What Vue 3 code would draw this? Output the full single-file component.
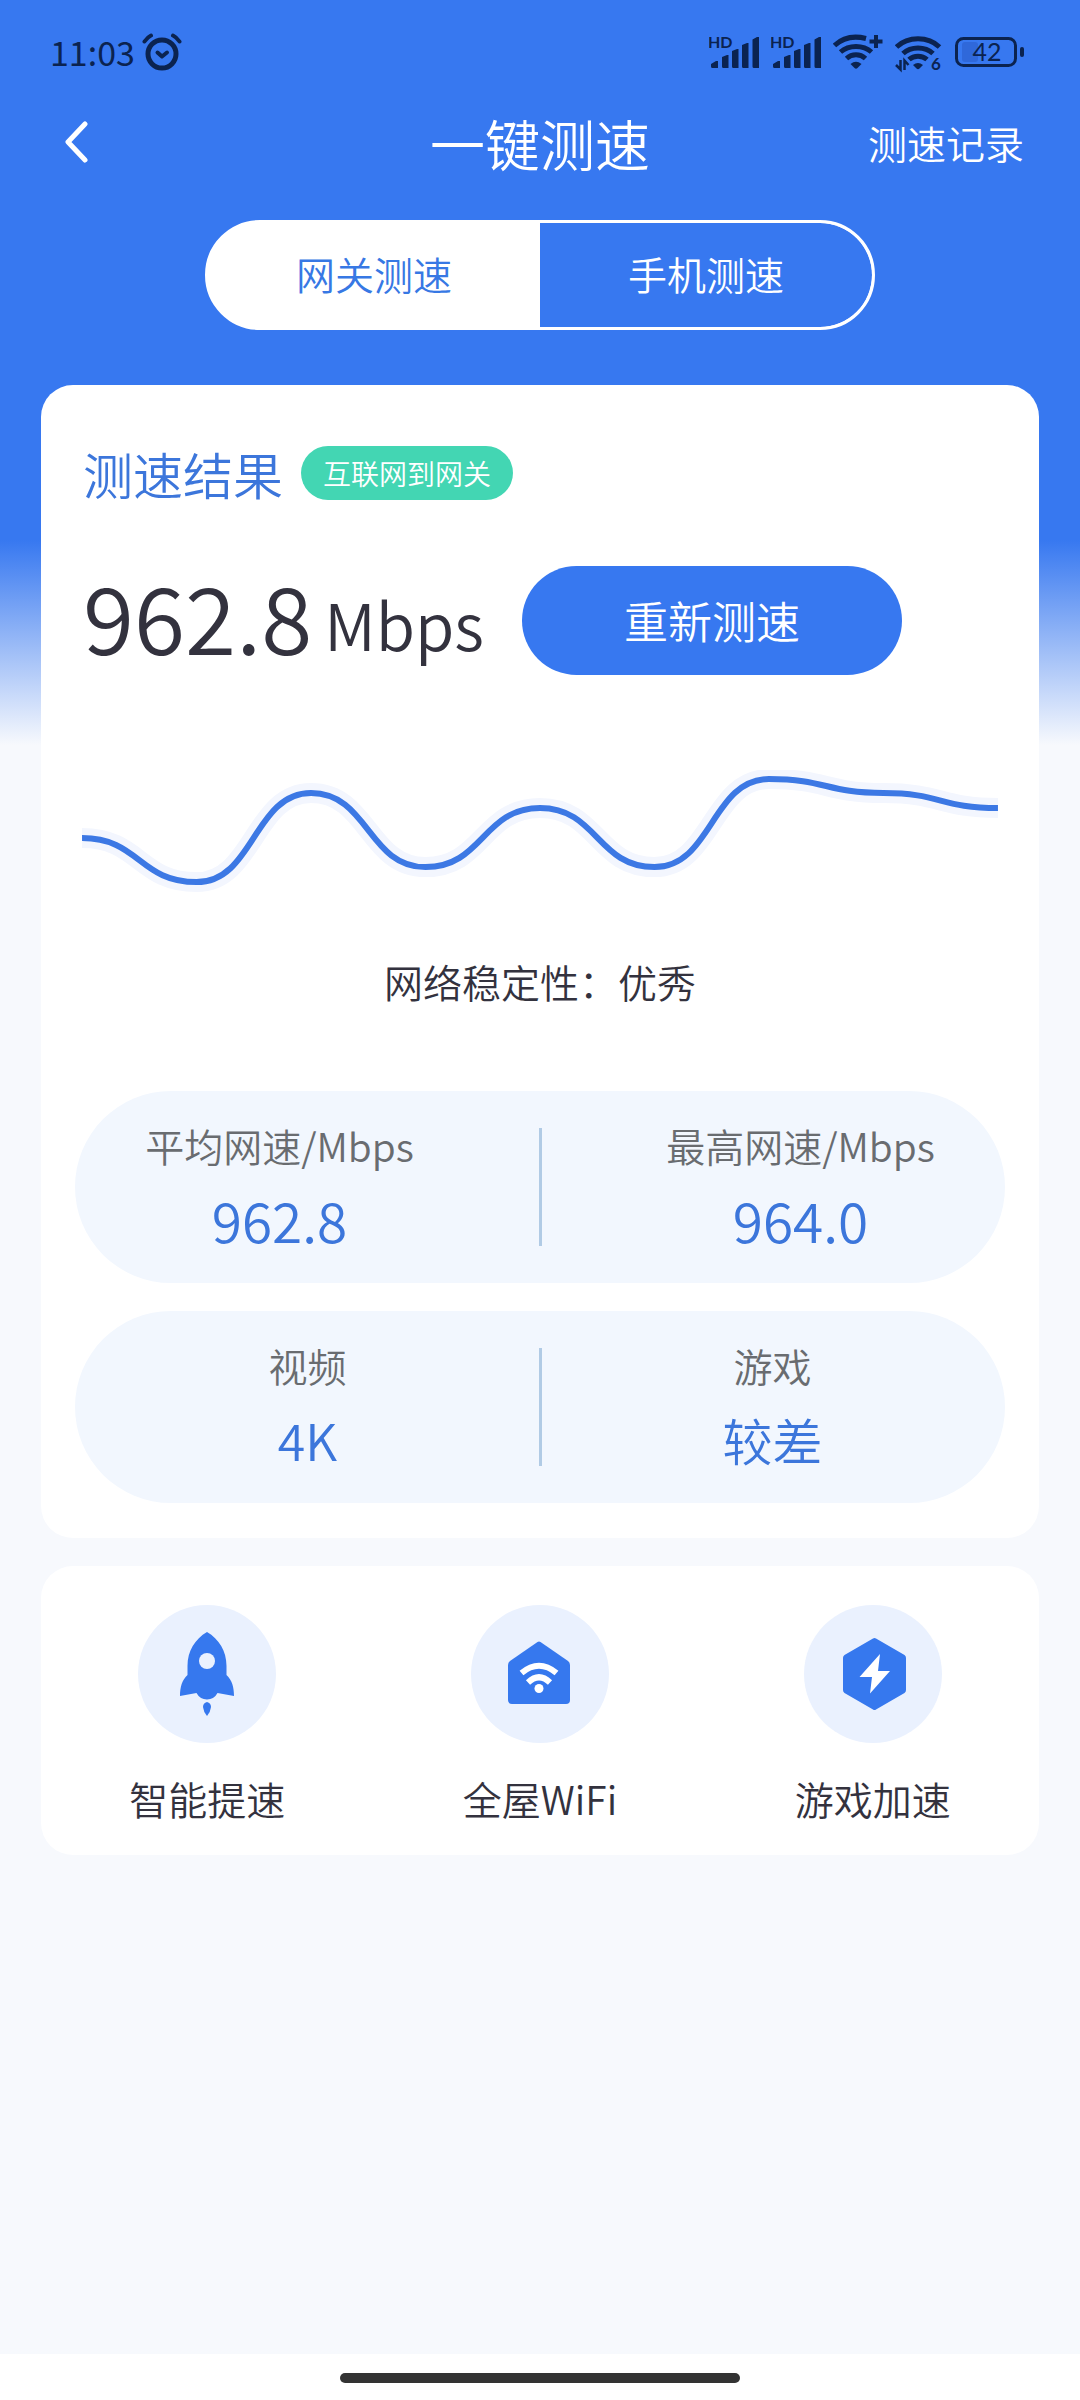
<script setup>
import { ref } from 'vue'

const tabs = ['网关测速', '手机测速']
const activeTab = ref(0)

const samples = [68, 112, 23, 97, 38, 97, 9, 23, 38]
const chartWidth = 915

function smoothPath(values) {
  const step = chartWidth / (values.length - 1)
  return values.reduce((path, y, i) => {
    if (i === 0) return `M0 ${y}`
    const mid = (i - 0.5) * step
    return `${path} C${mid} ${values[i - 1]} ${mid} ${y} ${i * step} ${y}`
  }, '')
}
const linePath = smoothPath(samples)

const speeds = [
  { label: '平均网速/Mbps', value: '962.8' },
  { label: '最高网速/Mbps', value: '964.0' },
]
const ratings = [
  { label: '视频', value: '4K' },
  { label: '游戏', value: '较差' },
]
</script>

<template>
  <div class="page">
    <div class="status">
      <div class="status-left">
        <span class="time">11:03</span>
        <svg width="40" height="40" viewBox="0 0 40 40" fill="none" stroke="currentColor" stroke-linecap="round" aria-hidden="true">
          <circle cx="20" cy="22" r="14" stroke-width="5" />
          <path d="M2.500 9.500C4.500 6.500 6.500 4.700 9 3.500M37.500 9.500C35.500 6.500 33.500 4.700 31 3.500" stroke-width="4" />
          <path d="M15.500 20.500L20 24.500L25 20.500" stroke-width="4" stroke-linejoin="round" />
        </svg>
      </div>
      <div class="status-right">
        <svg v-for="n in 2" :key="n" width="50" height="40" viewBox="0 0 50 40" fill="currentColor" aria-hidden="true">
          <text x="-1" y="16" class="hd">HD</text>
          <path d="M2 32L7 29H9V36H3.500Q2 36 2 34.500ZM13 25L18 23H19.500V36H14.500Q13 36 13 34.500ZM23 19L28 17H29.500V36H24.500Q23 36 23 34.500ZM33 13L38 11H39.500V36H34.500Q33 36 33 34.500ZM43.500 7.500L48 5H50V36H45Q43.500 36 43.500 34.500Z" />
        </svg>
        <svg width="50" height="40" viewBox="0 0 50 40" fill="none" stroke="currentColor" stroke-width="5" aria-hidden="true">
          <path d="M1.500 13.500C10 5.500 21 3.500 33 6.500M7.500 20C16 12.500 30 12.500 38.500 20M13.500 26.500C19 21.500 27 21.500 32.500 26.500" />
          <path d="M17.500 32Q23 27.500 28.500 32L24.500 36Q23 37.500 21.500 36Z" fill="currentColor" stroke="none" />
          <path d="M43 3V16M36.500 9.500H49.500" stroke-width="4" />
        </svg>
        <svg width="48" height="44" viewBox="0 -2 48 44" fill="none" stroke="currentColor" stroke-width="5" aria-hidden="true">
          <path d="M1.500 15C13 4 33 4 44.500 15M8 21.500C16 14 30 14 38 21.500M14 27.500C19 23 27 23 32 27.500" />
          <path d="M18 33Q23 29 28 33L24.500 36.500Q23 38 21.500 36.500Z" fill="currentColor" stroke="none" />
          <path d="M5.500 28V37.500L1 33M9.500 38V28.500L13.500 33" stroke-width="2.500" />
          <text x="36" y="38" class="six">6</text>
        </svg>
        <svg width="69" height="40" viewBox="0 0 69 40" fill="none" aria-hidden="true">
          <rect x="7" y="10" width="16" height="20" rx="3" fill="#2f68da" />
          <rect x="1.500" y="6.500" width="59" height="27" rx="7" stroke="currentColor" stroke-width="3" />
          <rect x="65" y="15" width="4" height="10" rx="2" fill="currentColor" />
          <text x="32" y="29" text-anchor="middle" class="charge">42</text>
        </svg>
      </div>
    </div>

    <header class="nav">
      <button class="back" type="button" aria-label="返回">
        <svg width="32" height="42" viewBox="0 0 32 42" fill="none" stroke="currentColor" stroke-width="5" stroke-linecap="round" stroke-linejoin="round">
          <path d="M29 3L12 21L29 39" />
        </svg>
      </button>
      <h1>一键测速</h1>
      <a class="records" href="#records">测速记录</a>
    </header>

    <div class="tabs" role="tablist">
      <button
        v-for="(tab, i) in tabs"
        :key="tab"
        type="button"
        role="tab"
        :aria-selected="activeTab === i"
        :class="{ active: activeTab === i }"
        @click="activeTab = i"
      >{{ tab }}</button>
    </div>

    <main>
      <section class="card result">
        <div class="heading">
          <h2>测速结果</h2>
          <span class="badge">互联网到网关</span>
        </div>
        <div class="speed">
          <div class="reading">
            <span class="number">962.8</span>
            <span class="unit">Mbps</span>
          </div>
          <button class="retest" type="button">重新测速</button>
        </div>
        <div class="chart">
          <svg viewBox="0 0 915 125" fill="none" aria-hidden="true">
            <path :d="linePath" stroke="#f3f6fe" stroke-width="20" />
            <path :d="linePath" stroke="#3c78e4" stroke-width="6" />
          </svg>
        </div>
        <p class="stability">网络稳定性：优秀</p>
        <div class="pill speeds">
          <div v-for="s in speeds" :key="s.label" class="stat">
            <span class="label">{{ s.label }}</span>
            <span class="value">{{ s.value }}</span>
          </div>
        </div>
        <div class="pill ratings">
          <div v-for="s in ratings" :key="s.label" class="stat">
            <span class="label">{{ s.label }}</span>
            <span class="value">{{ s.value }}</span>
          </div>
        </div>
      </section>

      <nav class="card tools">
        <a href="#boost">
          <svg width="138" height="138" viewBox="0 0 138 138" aria-hidden="true">
            <circle cx="69" cy="69" r="69" fill="#eaf1fe" />
            <path d="M69 27C81 34 88.500 46 88.500 61V70C94 75 96 82 96 91L79.500 88Q76 94.500 69 94.500T58.500 88L42 91C42 82 44 75 49.500 70V61C49.500 46 57 34 69 27Z" fill="#3678ee" />
            <circle cx="69" cy="56" r="8" fill="#eaf1fe" />
            <path d="M69 97Q73 98 73 102Q72.500 107 69 111Q65.500 107 65 102Q65 98 69 97Z" fill="#3678ee" />
          </svg>
          <span>智能提速</span>
        </a>
        <a href="#wifi">
          <svg width="138" height="138" viewBox="0 0 138 138" aria-hidden="true">
            <circle cx="69" cy="69" r="69" fill="#eaf1fe" />
            <path d="M66.500 37Q68 36 69.500 37L97 56Q99 57.500 99 60V95Q99 99 95 99H41Q37 99 37 95V60Q37 57.500 39 56Z" fill="#3678ee" />
            <g fill="none" stroke="#fff" stroke-width="6">
              <path d="M50.500 68Q68 53.500 85.500 68M57 77.500Q68 67 79 77.500" />
            </g>
            <circle cx="68" cy="83.500" r="4.500" fill="#fff" />
          </svg>
          <span>全屋WiFi</span>
        </a>
        <a href="#game">
          <svg width="138" height="138" viewBox="0 0 138 138" aria-hidden="true">
            <circle cx="69" cy="69" r="69" fill="#eaf1fe" />
            <path d="M69 33.500Q70.500 32.500 72 33.500L100.500 50Q102 51 102 53V85Q102 87 100.500 88L72 104.500Q70.500 105.500 69 104.500L40.500 88Q39 87 39 85V53Q39 51 40.500 50Z" fill="#3678ee" />
            <path d="M76 49L55.500 72H68L66 88.500L86 66H74Z" fill="#fff" />
          </svg>
          <span>游戏加速</span>
        </a>
      </nav>
    </main>

    <footer><div class="home-bar"></div></footer>
  </div>
</template>

<style>
body {
  background: #f7f9fd;
}
</style>

<style scoped>
.page {
  display: flex;
  flex-direction: column;
  min-height: 100vh;
  background: linear-gradient(#3778f0 540px, #f7f9fd 745px);
  color: #33323e;
  font-family: "Noto Sans CJK SC", sans-serif;
  font-size: 39px;
  font-weight: 350;
  line-height: 54px;
}
h1,
h2,
p {
  margin: 0;
  font-weight: 350;
}
button {
  padding: 0;
  border: 0;
  background: none;
  color: inherit;
  font: inherit;
  cursor: pointer;
}
a {
  color: inherit;
  text-decoration: none;
}
svg {
  display: block;
  flex: none;
}

.status {
  display: flex;
  justify-content: space-between;
  align-items: center;
  height: 104px;
  padding: 0 56px 0 50px;
  color: #0b2350;
}
.status-left,
.status-right {
  display: flex;
  align-items: center;
}
.status-left {
  gap: 7px;
}
.status-right {
  gap: 12px;
}
.time {
  font-size: 34px;
  font-weight: 400;
}
svg text {
  fill: currentColor;
  stroke: none;
  font-family: Lato, sans-serif;
}
.hd {
  font-size: 16px;
  font-weight: 700;
}
.six {
  font-size: 17px;
  font-weight: 700;
}
.charge {
  font-size: 25px;
  font-weight: 400;
}

.nav {
  display: grid;
  grid-template-columns: 1fr auto 1fr;
  align-items: center;
  height: 76px;
  padding: 0 56px 2px;
  color: #fff;
}
.back {
  justify-self: start;
}
.nav h1 {
  font-size: 55px;
}
.records {
  justify-self: end;
}

.tabs {
  display: grid;
  grid-template-columns: 1fr 1fr;
  box-sizing: border-box;
  width: 62%;
  height: 110px;
  margin: 38px auto 0;
  overflow: hidden;
  border: 3px solid #fff;
  border-radius: 55px;
  background: #fff;
  color: #fff;
}
.tabs button {
  padding-bottom: 4px;
  background: #3778f0;
}
.tabs button:last-child {
  border-radius: 0 52px 52px 0;
}
.tabs .active {
  background: #fff;
  color: #3778e4;
}

.card {
  border-radius: 32px;
  background: #fff;
}
.result {
  margin: 55px 41px 0;
  padding: 61px 34px 35px;
}
.heading {
  display: flex;
  align-items: center;
  gap: 18px;
  padding: 0 8px;
}
.heading h2 {
  color: #3c76db;
  font-size: 50px;
}
.badge {
  padding: 0 22px;
  border-radius: 27px;
  background: #43d6b3;
  color: #fff;
  font-size: 28px;
  line-height: 54px;
}
.speed {
  display: flex;
  align-items: flex-end;
  margin-top: 66px;
  padding: 0 8px;
}
.reading {
  display: flex;
  align-items: flex-end;
  padding-bottom: 12px;
}
.number {
  font-size: 93px;
  line-height: 96px;
}
.unit {
  margin-left: 12px;
  font-size: 64px;
  line-height: 80px;
}
.retest {
  width: 380px;
  height: 109px;
  margin-left: 38px;
  padding-bottom: 2px;
  border-radius: 55px;
  background: #3778f0;
  color: #fff;
  font-size: 44px;
}
.chart {
  margin-top: 95px;
  padding: 0 7px;
}
.chart svg {
  width: 100%;
}
.stability {
  margin-top: 59px;
  text-align: center;
}
.pill {
  display: grid;
  grid-template-columns: 1fr 1fr;
  position: relative;
  padding: 27px 0 25px;
  border-radius: 96px;
  background: #f2f7fe;
}
.pill::after {
  content: "";
  position: absolute;
  top: 37px;
  bottom: 37px;
  left: calc(50% - 1px);
  width: 3px;
  background: #b1cbe5;
}
.speeds {
  margin-top: 83px;
}
.ratings {
  margin-top: 28px;
}
.stat {
  display: flex;
  flex-direction: column;
  align-items: center;
  gap: 8px;
}
.speeds .stat:first-child {
  padding-right: 56px;
}
.speeds .stat:last-child {
  padding-left: 56px;
}
.label {
  color: #696c70;
}
.value {
  color: #3c76db;
  font-size: 55px;
  line-height: 78px;
}
.ratings .value {
  font-size: 50px;
}

.tools {
  display: grid;
  grid-template-columns: repeat(3, 1fr);
  margin: 28px 41px;
  padding: 39px 0 30px;
}
.tools a {
  display: flex;
  flex-direction: column;
  align-items: center;
  gap: 28px;
}

footer {
  display: flex;
  height: 46px;
  margin-top: auto;
  background: #fff;
}
.home-bar {
  width: 37%;
  height: 10px;
  margin: 19px auto 0;
  border-radius: 5px;
  background: #333;
}
</style>
